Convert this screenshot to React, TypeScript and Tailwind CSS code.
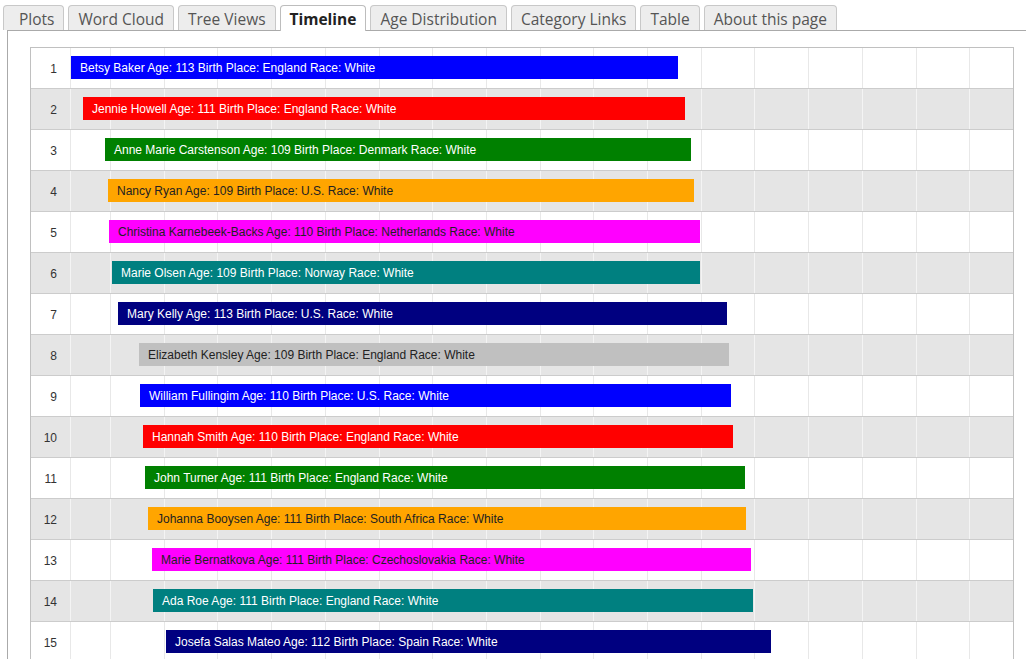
import React from "react";

const tabs = ["Plots", "Word Cloud", "Tree Views", "Timeline", "Age Distribution", "Category Links", "Table", "About this page"];

const colors: Record<string, { bg: string; fg: string }> = {
	blue: { bg: "#0000ff", fg: "#ffffff" },
	red: { bg: "#ff0000", fg: "#ffffff" },
	green: { bg: "#008000", fg: "#ffffff" },
	orange: { bg: "#ffa500", fg: "#222222" },
	magenta: { bg: "#ff00ff", fg: "#222222" },
	teal: { bg: "#008080", fg: "#ffffff" },
	navy: { bg: "#000080", fg: "#ffffff" },
	silver: { bg: "#c0c0c0", fg: "#222222" },
};

// [label, colour, start x, end x] in page pixels
const people: [string, string, number, number][] = [
	["Betsy Baker Age: 113 Birth Place: England Race: White", "blue", 71, 678],
	["Jennie Howell Age: 111 Birth Place: England Race: White", "red", 83, 685],
	["Anne Marie Carstenson Age: 109 Birth Place: Denmark Race: White", "green", 105, 691],
	["Nancy Ryan Age: 109 Birth Place: U.S. Race: White", "orange", 108, 694],
	["Christina Karnebeek-Backs Age: 110 Birth Place: Netherlands Race: White", "magenta", 109, 700],
	["Marie Olsen Age: 109 Birth Place: Norway Race: White", "teal", 112, 700],
	["Mary Kelly Age: 113 Birth Place: U.S. Race: White", "navy", 118, 727],
	["Elizabeth Kensley Age: 109 Birth Place: England Race: White", "silver", 139, 729],
	["William Fullingim Age: 110 Birth Place: U.S. Race: White", "blue", 140, 731],
	["Hannah Smith Age: 110 Birth Place: England Race: White", "red", 143, 733],
	["John Turner Age: 111 Birth Place: England Race: White", "green", 145, 745],
	["Johanna Booysen Age: 111 Birth Place: South Africa Race: White", "orange", 148, 746],
	["Marie Bernatkova Age: 111 Birth Place: Czechoslovakia Race: White", "magenta", 152, 751],
	["Ada Roe Age: 111 Birth Place: England Race: White", "teal", 153, 753],
	["Josefa Salas Mateo Age: 112 Birth Place: Spain Race: White", "navy", 166, 771],
];

const chartLeft = 31;
const ticks = [39, ...Array.from({ length: 17 }, (_, i) => 79 + i * 53.7)];

function Row({ index, person }: { index: number; person: [string, string, number, number] }) {
	const [label, colour, start, end] = person;
	const shaded = index % 2 === 1;
	const c = colors[colour];
	return (
		<div className={`relative flex h-[41px] items-center border-b border-[#cccccc] ${shaded ? "bg-[#e5e5e5]" : "bg-white"}`}>
			{ticks.map((t) => (
				<div
					key={t}
					className={`absolute top-0 bottom-0 w-px ${shaded ? "bg-[#f4f4f4]" : "bg-[#e8e8e8]"}`}
					style={{ left: Math.round(t) }}
				/>
			))}
			<div className="relative w-[26px] pt-[2px] text-right text-[12px] text-[#333] font-['Liberation_Sans',Arial,sans-serif]">
				{index + 1}
			</div>
			<div
				className="absolute top-[8px] h-[23px] overflow-hidden whitespace-nowrap pl-[9px] pt-[1px] text-[12px] leading-[23px] font-['Liberation_Sans',Arial,sans-serif]"
				style={{ left: start - chartLeft, width: end - start, background: c.bg, color: c.fg }}
			>
				{label}
			</div>
		</div>
	);
}

export default function App() {
	return (
		<div className="h-[659px] w-[1026px] overflow-hidden bg-white font-['Open_Sans',sans-serif]">
			<div className="flex h-[30px] items-end gap-[4px] pl-[3px]">
				{tabs.map((t) =>
					t === "Timeline" ? (
						<div
							key={t}
							className="relative z-10 -mb-px flex h-[26px] items-center rounded-t-[4px] border border-b-0 border-[#bdbdbd] bg-white px-[9px] pt-[3px] text-[15.5px] font-bold text-[#222]"
						>
							{t}
						</div>
					) : (
						<div
							key={t}
							className={`flex h-[25px] items-center rounded-t-[4px] border border-b-0 border-[#c8c8c8] bg-[#ededed] pt-[3px] text-[15.5px] text-[#555] ${t === "Plots" ? "pl-[15px] pr-[9px]" : "px-[9px]"}`}
						>
							{t}
						</div>
					)
				)}
			</div>
			<div className="ml-[7px] h-[700px] border-l border-t border-[#aaaaaa] pl-[22px] pt-[16px]">
				<div className="w-[984px] border border-[#c0c0c0]">
					{people.map((p, i) => (
						<Row key={i} index={i} person={p} />
					))}
				</div>
			</div>
		</div>
	);
}
